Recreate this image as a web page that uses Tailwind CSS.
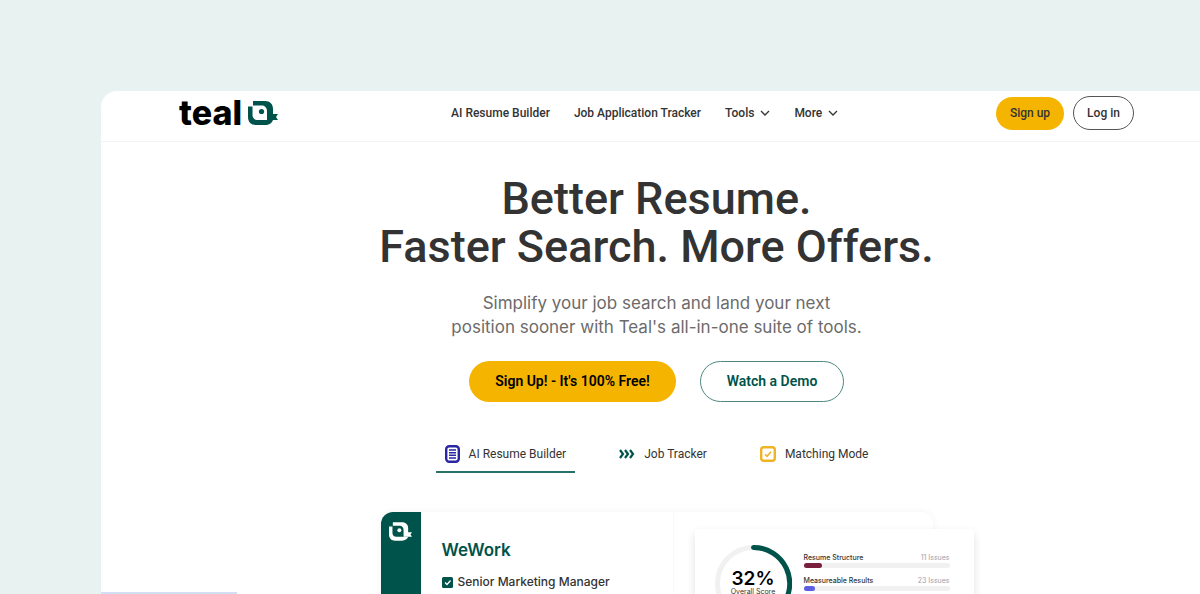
<!DOCTYPE html>
<html lang="en">
<head>
    <meta charset="UTF-8">
    <meta name="viewport" content="width=device-width, initial-scale=1.0">
    <title>Teal - Better Resume. Faster Search. More Offers.</title>
    <script src="https://cdn.jsdelivr.net/npm/@tailwindcss/browser@4"></script>
</head>
<body class="bg-[#e8f2f0] font-['Inter',sans-serif] text-[#333333]">

    <!-- Page frame -->
    <div class="relative h-screen overflow-hidden flex flex-col pl-[101px] pt-[91px]">
        <div class="flex-1 bg-white rounded-tl-2xl">

            <!-- Header -->
            <header class="flex items-center h-[51px] pl-[78px] pr-[66px] pb-1.5 border-b border-gray-100 font-['Roboto',sans-serif]">
                <a href="#" class="flex items-center gap-1.5 text-black" aria-label="Teal home">
                    <span class="font-['Inter',sans-serif] text-[34px] leading-[40px] font-extrabold">teal</span>
                    <svg class="w-[30px] h-6" viewBox="0 0 30 24">
                        <path d="M5 0H17C22 0 25 3 25 8V13H30L28 16L30 19H19V10C19 7 17 4.500 14 4.500H5Z" fill="#00534a"/>
                        <path d="M0 5.500H4.500V14C4.500 17 6.500 19 9.500 19H25C24 22 21 24 17 24H8C3 24 0 21 0 16Z" fill="#00534a"/>
                        <circle cx="13.500" cy="10.500" r="2.600" fill="#00534a"/>
                    </svg>
                </a>
                <nav class="flex items-center gap-6 ml-[173px] text-[12px] font-medium whitespace-nowrap">
                    <a href="#">AI Resume Builder</a>
                    <a href="#">Job Application Tracker</a>
                    <button type="button" class="flex items-center gap-1.5">Tools
                        <svg class="w-2.5 h-2.5" viewBox="0 0 10 10" fill="none" stroke="#333333" stroke-width="1.300"><path d="M1 3L5 7L9 3"/></svg>
                    </button>
                    <button type="button" class="flex items-center gap-1.5">More
                        <svg class="w-2.5 h-2.5" viewBox="0 0 10 10" fill="none" stroke="#333333" stroke-width="1.300"><path d="M1 3L5 7L9 3"/></svg>
                    </button>
                </nav>
                <div class="flex items-center gap-[9px] ml-auto text-[12px] font-medium whitespace-nowrap">
                    <button type="button" class="w-[68px] h-[33px] rounded-full bg-[#f5b400]">Sign up</button>
                    <button type="button" class="w-[61px] h-[34px] rounded-full border border-[#555555]">Log in</button>
                </div>
            </header>

            <!-- Hero -->
            <main class="flex flex-col items-center pl-3 pt-[33px]">
                <h1 class="font-['Roboto',sans-serif] text-[45px] leading-[48px] font-medium text-center whitespace-nowrap">Better Resume.<br>Faster Search. More Offers.</h1>
                <p class="mt-5 text-[17px] leading-6 text-center text-[#6b6b6b] whitespace-nowrap">Simplify your job search and land your next<br>position sooner with Teal's all-in-one suite of tools.</p>

                <div class="flex gap-6 mt-[22px] font-['Roboto',sans-serif] text-[14px] font-semibold whitespace-nowrap">
                    <button type="button" class="w-[207px] h-[41px] rounded-full bg-[#f5b400] text-black">Sign Up! - It's 100% Free!</button>
                    <button type="button" class="w-[144px] h-[41px] rounded-full border border-[#4d877f] text-[#00534a]">Watch a Demo</button>
                </div>

                <!-- Feature tabs -->
                <div class="flex gap-[35px] mt-[35px] font-['Roboto',sans-serif] text-[12px] whitespace-nowrap" role="tablist">
                    <button type="button" role="tab" aria-selected="true" class="flex items-center gap-[9px] h-9 px-[9px] border-b-2 border-[#2a7268]">
                        <svg class="w-[15px] h-[18px]" viewBox="0 0 15 18" fill="none" stroke="#2a25a5">
                            <rect x="1.200" y="1.200" width="12.600" height="15.600" rx="3" stroke-width="2.400"/>
                            <path d="M4 5H11M4 7.700H11M4 10.300H11M4 13H11" stroke-width="1.600"/>
                        </svg>
                        AI Resume Builder
                    </button>
                    <button type="button" role="tab" aria-selected="false" class="flex items-center gap-[9px] h-9 px-[9px] border-b-2 border-transparent">
                        <svg class="w-4 h-2.5" viewBox="0 0 16 10" fill="none" stroke="#00534a" stroke-width="2.200"><path d="M1 1L4 5L1 9M6 1L9 5L6 9M11 1L14 5L11 9"/></svg>
                        Job Tracker
                    </button>
                    <button type="button" role="tab" aria-selected="false" class="flex items-center gap-[9px] h-9 px-[9px] border-b-2 border-transparent">
                        <svg class="w-4 h-4" viewBox="0 0 16 16" fill="none" stroke="#f0b323">
                            <rect x="1.200" y="1.200" width="13.600" height="13.600" rx="2.500" stroke-width="2.400"/>
                            <path d="M5 8.300L7 10.300L11 5.700" stroke-width="1.600"/>
                        </svg>
                        Matching Mode
                    </button>
                </div>

                <!-- Product preview -->
                <div class="relative flex w-[552px] h-80 mt-[39px] rounded-xl bg-white shadow-[0_0_8px_rgba(0,0,0,0.05)]">
                    <div class="w-10 pt-2.5 flex justify-center items-start rounded-l-xl bg-[#00534a]">
                        <svg class="w-[23px] h-[19px]" viewBox="0 0 30 24">
                            <path d="M5 0H17C22 0 25 3 25 8V13H30L28 16L30 19H19V10C19 7 17 4.500 14 4.500H5Z" fill="#ffffff"/>
                            <path d="M0 5.500H4.500V14C4.500 17 6.500 19 9.500 19H25C24 22 21 24 17 24H8C3 24 0 21 0 16Z" fill="#ffffff"/>
                            <circle cx="13.500" cy="10.500" r="2.600" fill="#ffffff"/>
                        </svg>
                    </div>
                    <div class="w-[253px] pl-[21px] pt-[26px] border-r border-gray-50">
                        <h2 class="text-[17px] leading-6 font-semibold text-[#00534a]">WeWork</h2>
                        <p class="flex items-center gap-[5px] mt-3 text-[12px] leading-4 font-medium whitespace-nowrap">
                            <svg class="w-[11px] h-[11px]" viewBox="0 0 11 11" fill="none"><rect width="11" height="11" rx="1.500" fill="#00534a"/><path d="M3 5.500L5 7.500L8.500 3.500" stroke="#ffffff" stroke-width="1.300"/></svg>
                            Senior Marketing Manager
                        </p>
                    </div>

                    <!-- Score card, floats over the preview -->
                    <div class="absolute left-[314px] top-[17px] flex w-[279px] h-64 pl-5 pt-4 pr-6 bg-white rounded shadow-[0_4px_10px_rgba(0,0,0,0.12)]">
                        <div class="relative w-[77px] h-[77px]">
                            <svg class="w-[77px] h-[77px]" viewBox="0 0 77 77" fill="none" stroke-width="5">
                                <circle cx="38.500" cy="38.500" r="36" stroke="#f1f1f1"/>
                                <path d="M38.500 2.500A36 36 0 0 1 66 62" stroke="#00534a" stroke-linecap="round"/>
                            </svg>
                            <div class="absolute inset-0 flex flex-col items-center pt-6 whitespace-nowrap">
                                <span class="text-[19px] leading-5 font-semibold text-black">32%</span>
                                <span class="text-[7px] leading-[6px]">Overall Score</span>
                            </div>
                        </div>
                        <div class="flex-1 ml-3 pt-2 text-[7px] leading-[10px]">
                            <div class="flex justify-between"><span class="font-medium">Resume Structure</span><span class="text-gray-400">11 Issues</span></div>
                            <div class="h-[5px] rounded-full bg-[#f1f1f1]"><div class="h-full rounded-full bg-[#7a1f3d]" style="width: 13%"></div></div>
                            <div class="flex justify-between mt-2"><span class="font-medium">Measureable Results</span><span class="text-gray-400">23 Issues</span></div>
                            <div class="h-[5px] rounded-full bg-[#f1f1f1]"><div class="h-full rounded-full bg-[#5d5fe0]" style="width: 8%"></div></div>
                        </div>
                    </div>
                </div>
            </main>
        </div>

        <!-- Link status strip -->
        <div class="absolute bottom-0 left-[101px] w-[136px] h-0.5 bg-[#d3e0f3]"></div>
    </div>

</body>
</html>
